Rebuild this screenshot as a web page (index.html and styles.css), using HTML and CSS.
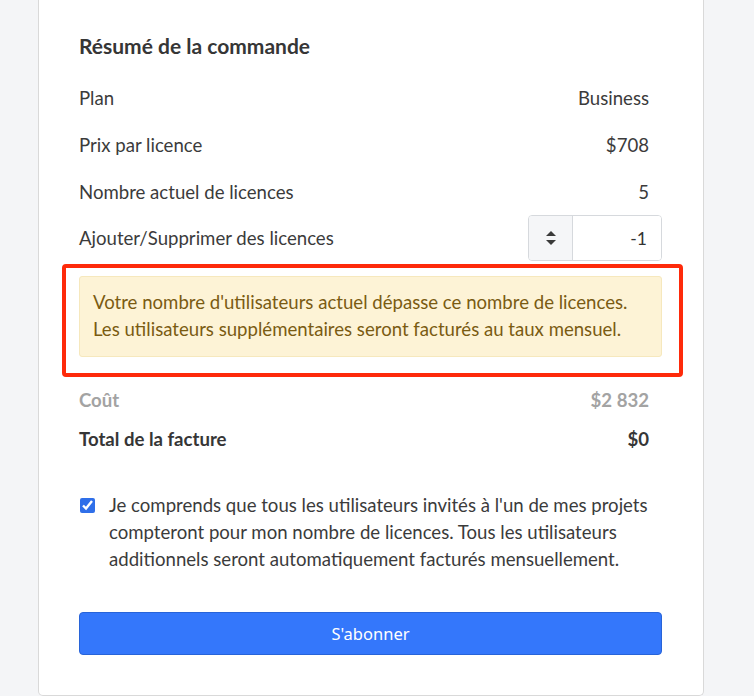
FILE: index.html
```html
<!DOCTYPE html>
<html lang="fr">
<head>
<meta charset="UTF-8">
<title>Résumé de la commande</title>
<link rel="stylesheet" href="styles.css">
</head>
<body>

<div class="card">
  <h2 class="title">Résumé de la commande</h2>

  <div class="row"><span>Plan</span><span>Business</span></div>
  <div class="row"><span>Prix par licence</span><span>$708</span></div>
  <div class="row"><span>Nombre actuel de licences</span><span>5</span></div>
  <div class="row row-input">
    <span>Ajouter/Supprimer des licences</span>
    <div class="stepper">
      <div class="spin">
        <svg width="12" height="20" viewBox="0 0 12 20">
          <path d="M1 8 L6 3 L11 8 Z" fill="#3a3a3a"/>
          <path d="M1 12 L6 17 L11 12 Z" fill="#3a3a3a"/>
        </svg>
      </div>
      <input class="qty" type="text" value="-1">
    </div>
  </div>

  <!-- annotation rouge autour de l'alerte -->
  <div class="alert-wrap">
    <div class="alert">
      Votre nombre d'utilisateurs actuel dépasse ce nombre de licences.<br>
      Les utilisateurs supplémentaires seront facturés au taux mensuel.
    </div>
  </div>

  <div class="sum muted"><span>Coût</span><span>$2 832</span></div>
  <div class="sum total"><span>Total de la facture</span><span>$0</span></div>

  <label class="agree">
    <input type="checkbox" checked>
    <span>Je comprends que tous les utilisateurs invités à l'un de mes projets compteront pour mon nombre de licences. Tous les utilisateurs additionnels seront automatiquement facturés mensuellement.</span>
  </label>

  <button class="btn">S'abonner</button>
</div>

</body>
</html>
```

FILE: styles.css
```css
body { margin: 0; background: #f4f5f7; font-family: Lato, "Noto Sans", sans-serif; color: #3b3b3b; }
.card { margin-left: 38px; width: 583px; background: #fff; border: 1px solid #d9d9d9; border-top: none; border-radius: 0 0 5px 5px; padding: 34px 41px 40px 40px; }
.title { margin: 0 0 16px; font-size: 21px; line-height: 24px; font-weight: 700; color: #363636; }
.row { display: flex; justify-content: space-between; align-items: center; height: 47px; padding-right: 13px; font-size: 18.6px; }
.row-input { height: 46px; padding-right: 0; }
.stepper { display: flex; width: 132px; height: 44px; border: 1px solid #d6d9dd; border-radius: 4px; overflow: hidden; }
.spin { width: 43px; background: #f5f6f8; border-right: 1px solid #d6d9dd; display: flex; align-items: center; justify-content: center; }
.qty { flex: 1; min-width: 0; border: none; outline: none; text-align: right; padding: 0 14px; font-family: Lato, sans-serif; font-size: 17.5px; color: #333; }
.alert-wrap { position: relative; margin-top: 15px; }
.alert-wrap::after { content: ""; position: absolute; left: -17px; right: -21px; top: -12px; bottom: -20px; border: 4px solid #fe2a0a; border-radius: 4px; }
.alert { background: #fdf3d6; border: 1px solid #f6e8bd; border-radius: 3px; padding: 12px 13px 13px; font-size: 18.6px; line-height: 27px; color: #7a5b12; }
.sum { display: flex; justify-content: space-between; font-size: 18.6px; line-height: 24px; padding: 8px 13px 8px 0; font-weight: 700; }
.sum.muted { margin-top: 23px; color: #a3a3a3; }
.sum.total { margin-top: -1px; color: #363636; }
.agree { display: flex; gap: 14px; margin-top: 33px; font-size: 18.6px; line-height: 27px; color: #3b3b3b; }
.agree input { flex: none; width: 15px; height: 15px; margin: 6px 0 0 1px; accent-color: #2f6fe9; }
.btn { display: block; width: 100%; margin-top: 39px; height: 43px; background: #3477fb; border: 1px solid #2864d8; border-radius: 4px; color: #fff; font-family: "Noto Sans", sans-serif; font-size: 16.5px; }
```
